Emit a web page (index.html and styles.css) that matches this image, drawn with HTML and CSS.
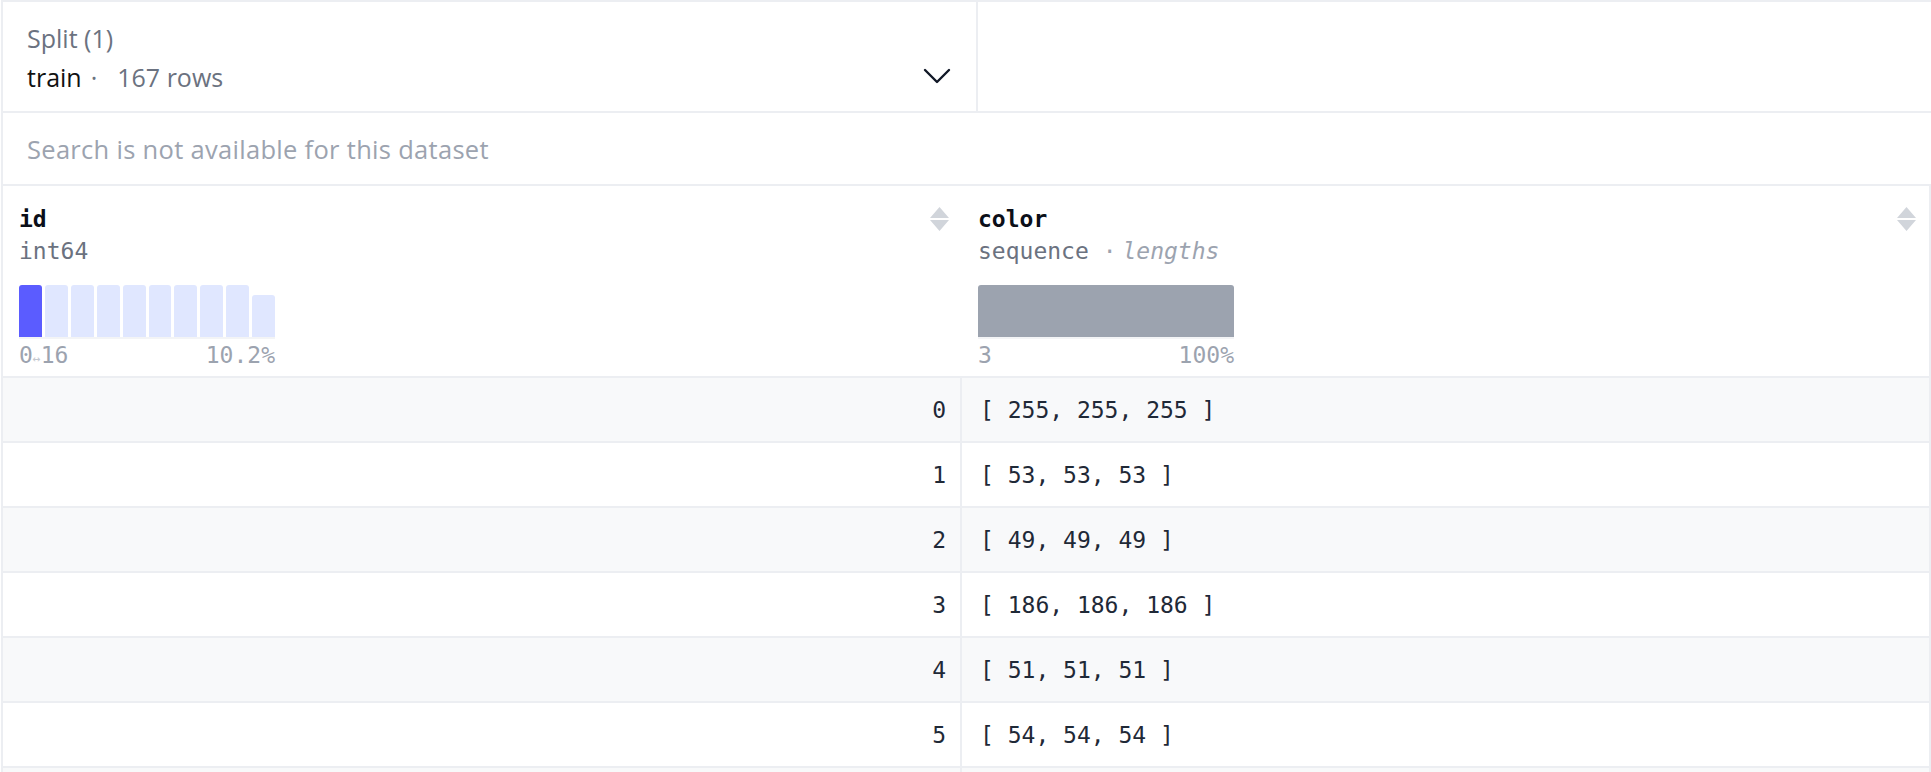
FILE: index.html
```html
<!DOCTYPE html>
<html>
<head>
<meta charset="utf-8">
<link rel="stylesheet" href="styles.css">
</head>
<body>
<div class="viewer">
  <div class="top">
    <div class="split">
      <div class="split-text">
        <div class="split-label">Split (1)</div>
        <div class="split-value"><span class="split-name">train</span><span class="split-dot">&middot;</span><span class="split-rows">167 rows</span></div>
      </div>
      <svg class="chevron" width="28" height="16" viewBox="0 0 28 16"><path d="M2 2 L14 14 L26 2" fill="none" stroke="#111827" stroke-width="2.4" stroke-linecap="round" stroke-linejoin="round"/></svg>
    </div>
    <div class="top-rest"></div>
  </div>
  <div class="search">Search is not available for this dataset</div>
  <div class="table">
    <div class="head">
      <div class="hcell hcell-id">
        <div class="hinfo">
          <div class="hname">id</div>
          <div class="htype">int64</div>
          <div class="hist">
            <div class="bars">
              <div class="bar bar-active"></div>
              <div class="bar"></div>
              <div class="bar"></div>
              <div class="bar"></div>
              <div class="bar"></div>
              <div class="bar"></div>
              <div class="bar"></div>
              <div class="bar"></div>
              <div class="bar"></div>
              <div class="bar bar-short"></div>
            </div>
            <div class="hlabels"><span>0<span class="arrow">&#8596;</span>16</span><span>10.2%</span></div>
          </div>
        </div>
        <svg class="sort" width="19" height="24" viewBox="0 0 19 24"><path d="M9.5 0 L19 11 L0 11 Z M0 13 L19 13 L9.5 24 Z" fill="#d1d5db"/></svg>
      </div>
      <div class="hcell hcell-color">
        <div class="hinfo">
          <div class="hname">color</div>
          <div class="htype">sequence <span class="dot">&middot;</span><em>lengths</em></div>
          <div class="hist">
            <div class="bars">
              <div class="bar bar-gray"></div>
            </div>
            <div class="hlabels"><span>3</span><span>100%</span></div>
          </div>
        </div>
        <svg class="sort" width="19" height="24" viewBox="0 0 19 24"><path d="M9.5 0 L19 11 L0 11 Z M0 13 L19 13 L9.5 24 Z" fill="#d1d5db"/></svg>
      </div>
    </div>
    <div class="row shade"><div class="c-id">0</div><div class="c-val">[ 255, 255, 255 ]</div></div>
    <div class="row"><div class="c-id">1</div><div class="c-val">[ 53, 53, 53 ]</div></div>
    <div class="row shade"><div class="c-id">2</div><div class="c-val">[ 49, 49, 49 ]</div></div>
    <div class="row"><div class="c-id">3</div><div class="c-val">[ 186, 186, 186 ]</div></div>
    <div class="row shade"><div class="c-id">4</div><div class="c-val">[ 51, 51, 51 ]</div></div>
    <div class="row"><div class="c-id">5</div><div class="c-val">[ 54, 54, 54 ]</div></div>
    <div class="row shade"><div class="c-id"></div><div class="c-val"></div></div>
  </div>
</div>
</body>
</html>
```
FILE: styles.css
```css
html, body {
  margin: 0;
  padding: 0;
  background: #ffffff;
  overflow: hidden;
}
.viewer {
  width: 1928px;
  margin-left: 1px;
  border-left: 2px solid #eceef2;
  font-family: "Open Sans", "Noto Sans", sans-serif;
}
.top {
  display: flex;
  border-top: 2px solid #eceef2;
  border-bottom: 2px solid #eceef2;
  height: 109px;
}
.split {
  width: 975px;
  border-right: 2px solid #eceef2;
  display: flex;
  align-items: flex-start;
  justify-content: space-between;
  padding: 17px 25px 0 24px;
  box-sizing: border-box;
}
.split-text {
  display: flex;
  flex-direction: column;
  gap: 1px;
  font-size: 25px;
  line-height: 38px;
}
.split-label { color: #6b7280; }
.split-name { color: #111111; }
.split-dot {
  color: #6b7280;
  margin: 0 20px 0 9px;
}
.split-rows { color: #6b7280; }
.chevron {
  margin-top: 49px;
}
.top-rest { flex: 1; }
.search {
  height: 71px;
  border-bottom: 2px solid #eceef2;
  display: flex;
  align-items: center;
  padding-left: 24px;
  font-size: 25.5px;
  letter-spacing: 0.3px;
  color: #9ca3af;
}
.table {
  border-right: 2px solid #eceef2;
  font-family: "DejaVu Sans Mono", "Liberation Mono", monospace;
  font-size: 23px;
}
.head {
  display: grid;
  grid-template-columns: 959px 1fr;
  border-bottom: 2px solid #eceef2;
  height: 192px;
  box-sizing: border-box;
}
.hcell {
  display: flex;
  justify-content: space-between;
  align-items: flex-start;
  padding: 17px 13px 0 16px;
}
.hname {
  font-weight: bold;
  color: #0b0f19;
  line-height: 32px;
}
.htype {
  color: #6b7280;
  line-height: 32px;
}
.htype em {
  color: #9ca3af;
  margin-left: 6px;
}
.dot { color: #9ca3af; }
.sort { margin-top: 4px; }
.hist {
  margin-top: 18px;
  width: 256px;
}
.bars {
  display: flex;
  align-items: flex-end;
  gap: 3px;
  height: 52px;
  border-bottom: 2px solid #f3f4f6;
}
.bar {
  flex: 1;
  height: 52px;
  background: #e0e7ff;
  border-radius: 3px 3px 0 0;
}
.bar-active { background: #5b5cff; }
.bar-short { height: 42px; }
.bar-gray { background: #9ca3af; }
.hlabels {
  display: flex;
  justify-content: space-between;
  color: #9ca3af;
  line-height: 32px;
}
.arrow {
  font-size: 13px;
  color: #c4c8cf;
}
.row {
  display: grid;
  grid-template-columns: 959px 1fr;
  height: 65px;
  border-bottom: 2px solid #eceef2;
  box-sizing: border-box;
  color: #1f2937;
  align-items: center;
}
.row.shade { background: #f8f9fa; }
.c-id {
  padding-right: 14px;
  border-right: 2px solid #eceef2;
  height: 100%;
  display: flex;
  align-items: center;
  justify-content: flex-end;
}
.c-val {
  padding-left: 18px;
}
```
